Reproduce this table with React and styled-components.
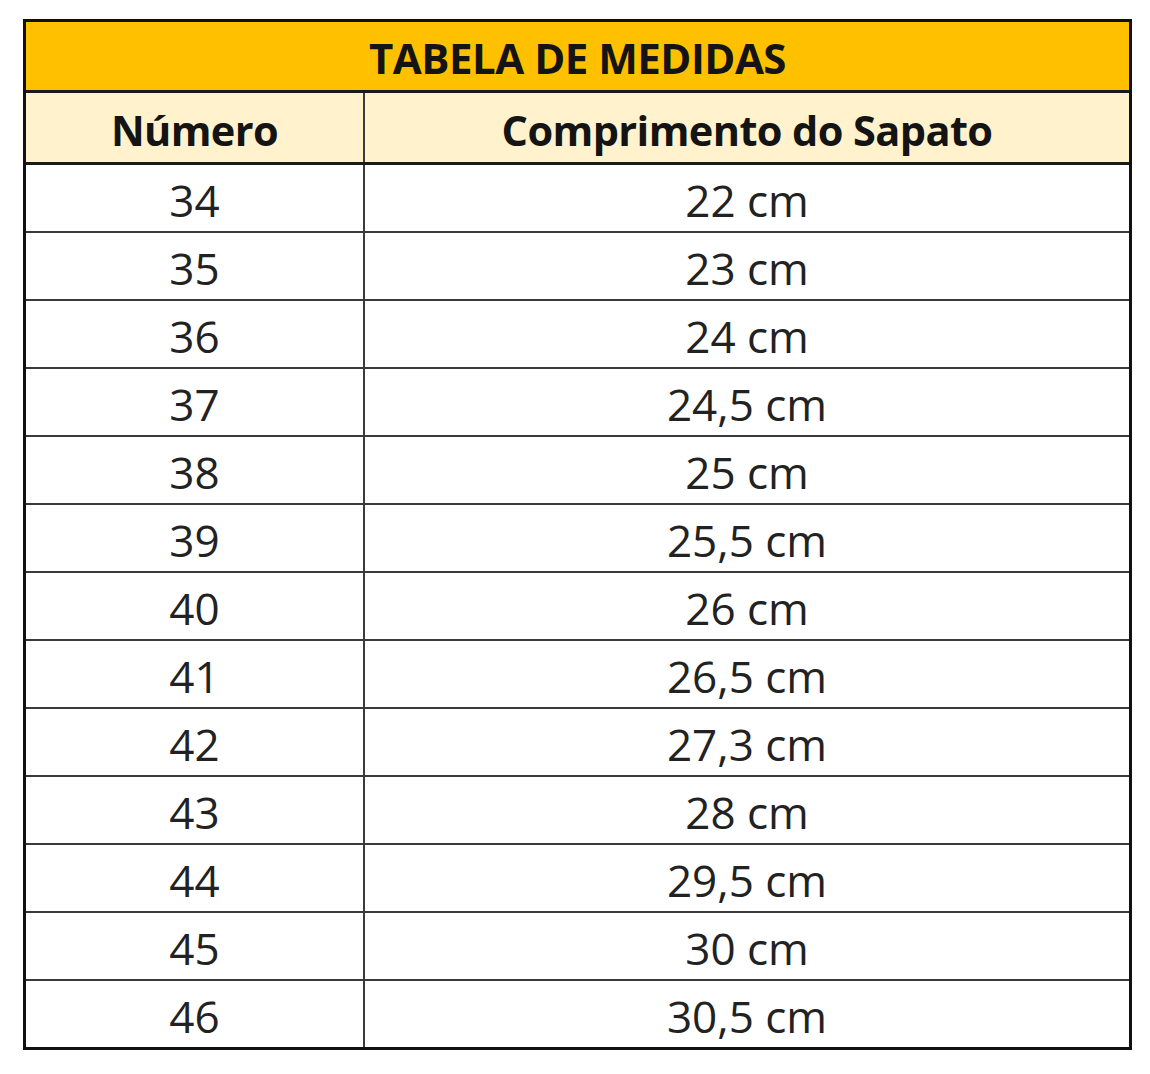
import * as React from "react";
import styled, { createGlobalStyle } from "styled-components";

const GlobalStyle = createGlobalStyle`
  body {
    margin: 0;
    background: #ffffff;
    font-family: "Open Sans", "Liberation Sans", sans-serif;
  }
`;

const sizes = [
  ["34", "22 cm"],
  ["35", "23 cm"],
  ["36", "24 cm"],
  ["37", "24,5 cm"],
  ["38", "25 cm"],
  ["39", "25,5 cm"],
  ["40", "26 cm"],
  ["41", "26,5 cm"],
  ["42", "27,3 cm"],
  ["43", "28 cm"],
  ["44", "29,5 cm"],
  ["45", "30 cm"],
  ["46", "30,5 cm"],
];

const Page = styled.div`
  padding: 19px 0 0 23px;
`;

const Table = styled.div`
  width: 1109px;
  box-sizing: border-box;
  border: 3px solid #111;
  display: flex;
  flex-direction: column;
`;

const Title = styled.div`
  height: 71px;
  background: #ffc000;
  border-bottom: 3px solid #1a1a1a;
  display: flex;
  align-items: center;
  justify-content: center;
  font-weight: 700;
  font-size: 42px;
  color: #141414;
  letter-spacing: -0.5px;
  padding-top: 2px;
  box-sizing: border-box;
`;

const Row = styled.div`
  display: grid;
  grid-template-columns: 337px 1fr;
  height: ${(p) => (p.head ? "69px" : "66px")};
  background: ${(p) => (p.head ? "#fff2cc" : "#ffffff")};
  border-bottom: ${(p) =>
    p.last ? "none" : p.head ? "3px solid #1a1a1a" : "2px solid #3a3a3a"};
`;

const Cell = styled.div`
  display: flex;
  align-items: center;
  justify-content: center;
  font-size: ${(p) => (p.head ? "41.5px" : "44px")};
  font-weight: ${(p) => (p.head ? 700 : 400)};
  color: ${(p) => (p.head ? "#141414" : "#222")};
  letter-spacing: ${(p) => (p.head ? "-0.6px" : "0")};
  padding-top: 4px;
  box-sizing: border-box;
  & + & {
    border-left: ${(p) => (p.head ? "3px solid #1a1a1a" : "2px solid #3a3a3a")};
  }
`;

export default function App() {
  return (
    <Page>
      <GlobalStyle />
      <Table>
        <Title>TABELA DE MEDIDAS</Title>
        <Row head>
          <Cell head>Número</Cell>
          <Cell head>Comprimento do Sapato</Cell>
        </Row>
        {sizes.map(([num, len], i) => (
          <Row key={num} last={i === sizes.length - 1}>
            <Cell>{num}</Cell>
            <Cell>{len}</Cell>
          </Row>
        ))}
      </Table>
    </Page>
  );
}
